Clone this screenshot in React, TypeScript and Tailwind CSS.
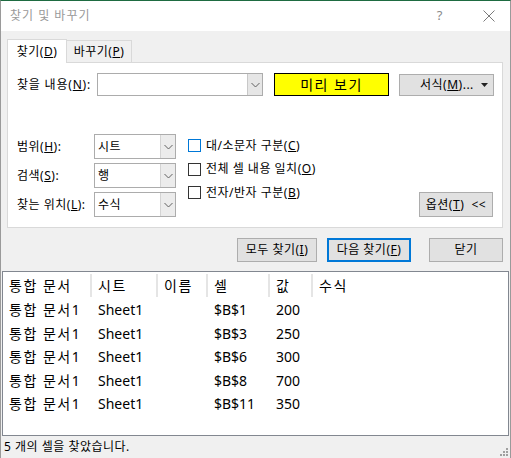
import React from "react";

const rows = [
  { book: "통합 문서1", sheet: "Sheet1", cell: "$B$1", value: "200" },
  { book: "통합 문서1", sheet: "Sheet1", cell: "$B$3", value: "250" },
  { book: "통합 문서1", sheet: "Sheet1", cell: "$B$6", value: "300" },
  { book: "통합 문서1", sheet: "Sheet1", cell: "$B$8", value: "700" },
  { book: "통합 문서1", sheet: "Sheet1", cell: "$B$11", value: "350" },
];

const cols = [
  { label: "통합 문서", w: "w-[89px]" },
  { label: "시트", w: "w-[66px]" },
  { label: "이름", w: "w-[50px]" },
  { label: "셀", w: "w-[62px]" },
  { label: "값", w: "w-[43px]" },
  { label: "수식", w: "flex-1" },
];

function Chevron() {
  return (
    <svg width="9" height="6" viewBox="0 0 9 6" fill="none">
      <path d="M0.5 1 L4.5 5 L8.5 1" stroke="#606060" strokeWidth="1" />
    </svg>
  );
}

function Select({ value }: { value: string }) {
  return (
    <div className="flex h-[25px] w-[82px] border border-[#acacac] bg-white">
      <div className="flex flex-1 items-center pl-[3px] text-[12px]">{value}</div>
      <div className="flex w-[15px] items-center justify-center border-l border-[#d4d4d4] bg-[#ececec]">
        <Chevron />
      </div>
    </div>
  );
}

function Check({ label, focus }: { label: React.ReactNode; focus?: boolean }) {
  return (
    <div className="flex h-[23.5px] items-center">
      <div
        className={`h-[13px] w-[13px] border bg-white ${
          focus ? "border-[#0078d7]" : "border-[#333333]"
        }`}
      />
      <span className="ml-[5px] text-[12px]">{label}</span>
    </div>
  );
}

function Btn({ children, w, primary }: { children: React.ReactNode; w: string; primary?: boolean }) {
  return (
    <div
      className={`flex h-[24px] items-center justify-center bg-[#e1e1e1] text-[12px] ${w} ${
        primary ? "border-2 border-[#0078d7]" : "border border-[#adadad]"
      }`}
    >
      {children}
    </div>
  );
}

export default function App() {
  return (
    <div
      className="flex h-[458px] w-[511px] flex-col border-x border-t border-x-[#9a9a9a] border-t-[#1e6b41] bg-[#f0f0f0] tracking-[0.5px] text-black"
      style={{ fontFamily: '"Noto Sans", "Noto Sans CJK KR", sans-serif' }}
    >
      {/* title bar */}
      <div className="flex h-[30px] shrink-0 items-center bg-white">
        <span className="ml-[9px] text-[12px] tracking-[1px] text-[#999999]">찾기 및 바꾸기</span>
        <span className="ml-auto mr-[40px] text-[13px] text-[#8a8a8a]">?</span>
        <svg width="12" height="12" viewBox="0 0 12 12" className="mr-[15px]">
          <path d="M0.5 0.5 L11.5 11.5 M11.5 0.5 L0.5 11.5" stroke="#7a7a7a" strokeWidth="1" />
        </svg>
      </div>

      {/* tabs */}
      <div className="ml-[6px] mt-[8px] flex items-end">
        <div className="relative z-10 -mb-px flex h-[24px] w-[60px] items-center justify-center border-x border-t border-[#d9d9d9] bg-white text-[12px]">
          찾기(<u>D</u>)
        </div>
        <div className="flex h-[22px] w-[65px] items-center justify-center border-r border-t border-[#d9d9d9] bg-[#f0f0f0] text-[12px]">
          바꾸기(<u>P</u>)
        </div>
      </div>

      {/* tab panel */}
      <div className="ml-[6px] mr-[7px] flex h-[166px] flex-col border border-[#d9d9d9] bg-white pl-[9px] pt-[10px] text-[12px]">
        <div className="flex items-center">
          <span className="w-[80px] tracking-[0.8px]">
            찾을 내용(<u>N</u>):
          </span>
          <div className="flex h-[23px] w-[166px] border border-[#acacac] bg-white">
            <div className="flex-1" />
            <div className="flex w-[15px] items-center justify-center border-l border-[#c8c8c8] bg-[#e6e6e6]">
              <Chevron />
            </div>
          </div>
          <div className="ml-[11px] flex h-[23px] w-[115px] items-center justify-center border border-black bg-[#ffff00] text-[14px] tracking-[1.5px]">
            미리 보기
          </div>
          <div className="ml-[10px] flex h-[22px] w-[95px] items-center border border-[#adadad] bg-[#e1e1e1]">
            <span className="ml-[20px]">
              서식(<u>M</u>)...
            </span>
            <svg width="7" height="4" viewBox="0 0 7 4" className="ml-auto mr-[5px]">
              <path d="M0 0 H7 L3.5 4 Z" fill="#222" />
            </svg>
          </div>
        </div>

        <div className="mt-[38px] flex">
          <div className="flex flex-col gap-[4px]">
            <div className="flex items-center">
              <span className="w-[77px]">
                범위(<u>H</u>):
              </span>
              <Select value="시트" />
            </div>
            <div className="flex items-center">
              <span className="w-[77px]">
                검색(<u>S</u>):
              </span>
              <Select value="행" />
            </div>
            <div className="flex items-center">
              <span className="w-[77px]">
                찾는 위치(<u>L</u>):
              </span>
              <Select value="수식" />
            </div>
          </div>
          <div className="ml-[12px] flex flex-col">
            <Check focus label={<>대/소문자 구분(<u>C</u>)</>} />
            <Check label={<>전체 셀 내용 일치(<u>O</u>)</>} />
            <Check label={<>전자/반자 구분(<u>B</u>)</>} />
          </div>
          <div className="ml-auto mr-[9px] flex items-end">
            <div className="flex h-[25px] w-[74px] items-center justify-center border border-[#adadad] bg-[#e1e1e1]">
              옵션(<u>T</u>)&nbsp;&nbsp;&lt;&lt;
            </div>
          </div>
        </div>
      </div>

      {/* action buttons */}
      <div className="mr-[7px] mt-[10px] flex justify-end">
        <Btn w="w-[80px]">
          모두 찾기(<u>I</u>)
        </Btn>
        <div className="ml-[10px]">
          <Btn w="w-[84px]" primary>
            다음 찾기(<u>F</u>)
          </Btn>
        </div>
        <div className="ml-[18px]">
          <Btn w="w-[74px]">닫기</Btn>
        </div>
      </div>

      {/* result list */}
      <div className="mx-[1px] mt-[9px] flex h-[165px] flex-col border border-[#828790] bg-white text-[14px] tracking-normal">
        <div className="flex h-[26px] shrink-0 items-center">
          {cols.map((c, i) => (
            <div
              key={i}
              className={`flex h-[23px] items-center pl-[6px] tracking-[1.5px] ${c.w} ${
                i < cols.length - 1 ? "border-r-2 border-[#e5e5e5]" : ""
              }`}
            >
              {c.label}
            </div>
          ))}
        </div>
        {rows.map((r, i) => (
          <div key={i} className="flex h-[23.5px] shrink-0 items-center">
            <div className="w-[89px] pl-[6px] tracking-[1.5px]">{r.book}</div>
            <div className="w-[66px] pl-[6px]">{r.sheet}</div>
            <div className="w-[50px] pl-[6px]" />
            <div className="w-[62px] pl-[6px]">{r.cell}</div>
            <div className="w-[43px] pl-[6px]">{r.value}</div>
            <div className="flex-1" />
          </div>
        ))}
      </div>

      {/* status bar */}
      <div className="relative flex h-[22px] items-center pl-[3px] text-[12px]">
        5 개의 셀을 찾았습니다.
        <svg width="10" height="10" viewBox="0 0 10 10" className="absolute bottom-[1px] right-[1px]">
          <rect x="7" y="1" width="2" height="2" fill="#a0a0a0" />
          <rect x="4" y="4" width="2" height="2" fill="#a0a0a0" />
          <rect x="7" y="4" width="2" height="2" fill="#a0a0a0" />
          <rect x="1" y="7" width="2" height="2" fill="#a0a0a0" />
          <rect x="4" y="7" width="2" height="2" fill="#a0a0a0" />
          <rect x="7" y="7" width="2" height="2" fill="#a0a0a0" />
        </svg>
      </div>
    </div>
  );
}
